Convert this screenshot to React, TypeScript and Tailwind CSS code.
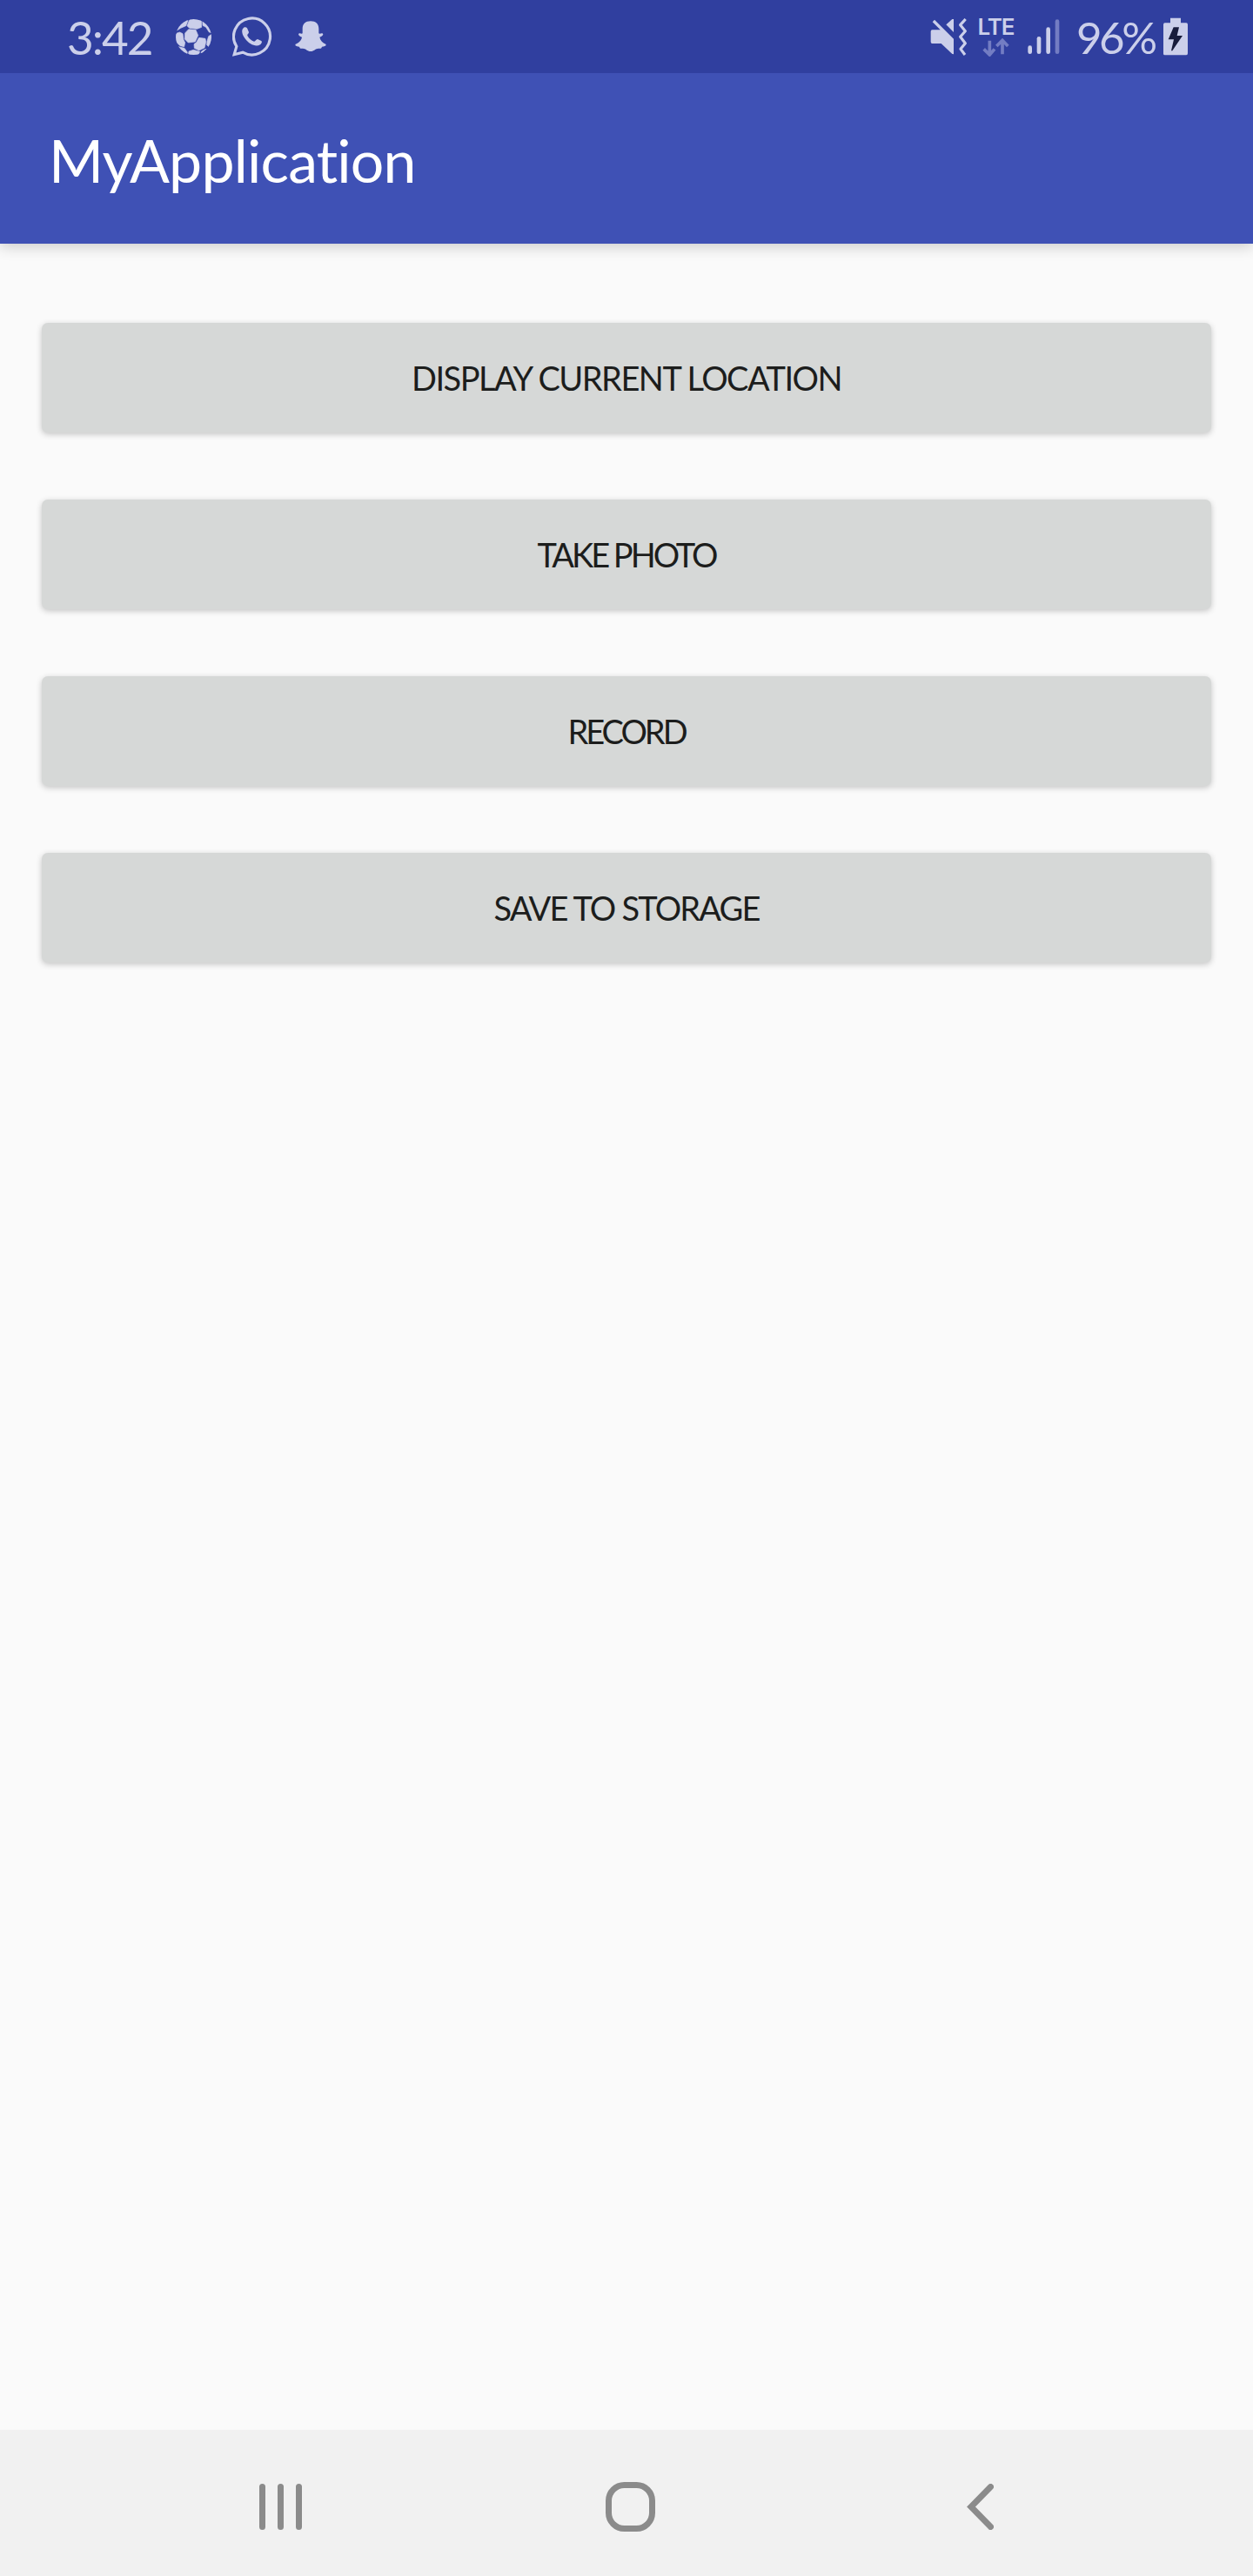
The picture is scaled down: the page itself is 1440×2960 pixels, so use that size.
import React from "react";

const INK = "#cbcfea";

function Ball() {
  return (
    <svg className="h-[41px] w-[41px]" viewBox="426 63 123 123">
      <defs>
        <clipPath id="ball">
          <circle cx="487.5" cy="124.500" r="61.500" />
        </clipPath>
      </defs>
      <g clipPath="url(#ball)" fill={INK} stroke={INK} strokeWidth="2" strokeLinejoin="round">
        <path d="M472 68 L480 60 L514 60 L515 91 L499 97 L473 94 L465 86Z" />
        <path d="M470 98 L495 100 L503 119 L493 141 L469 144 L457 132 L458 111Z" />
        <path d="M430 111 L440 108 L450 113 L453 134 L458 144 L455 158 L441 155 L426 140 L422 125Z" />
        <path d="M506 127 L528 130 L530 142 L525 162 L506 171 L490 163 L489 149 L497 143Z" />
        <path d="M462 62 L468 68 L461 86 L443 94 L430 102 L438 78Z" />
        <path d="M518 64 L542 80 L550 110 L541 108 L530 91 L519 85Z" />
        <path d="M539 122 L552 114 L552 138 L542 160 L533 152 L534 139Z" />
        <path d="M435 158 L456 163 L466 177 L464 186 L442 176Z" />
        <path d="M471 174 L487 169 L509 175 L502 190 L476 190 L470 181Z" />
        <path d="M523 169 L531 166 L518 180 L513 181 L514 175Z" />
      </g>
    </svg>
  );
}

function Whatsapp() {
  return (
    <svg className="ml-[24px] h-[46px] w-[46px]" viewBox="620 56 138 138">
      <path d="M626.500 187 L634.500 159 A63 63 0 1 1 656 179.500 Z" fill="none" stroke={INK} strokeWidth="9.500" />
      <path d="M657 97 C661 91 668 92 671 96 L677 110 C677 115 670 118 672 122 C678 133 686 139 695 142 C700 142 702 134 707 134 L720 140 C724 143 720 150 716 153 C707 159 694 157 683 150 C670 142 656 126 654 111 C653 105 654 100 657 97Z" fill={INK} />
    </svg>
  );
}

function Snap() {
  return (
    <svg className="ml-[26px] h-[36px] w-[36px]" viewBox="835 70 108 108">
      <path d="M889 71 C907 71 917 81 917 97 L917 113 C922 116 927 110 931 114 C935 119 925 124 920 126 C922 138 931 146 941 150 C945 156 936 159 928 159 C926 165 924 166 916 165 C905 165 901 175 889 175 C877 175 873 165 862 165 C854 166 852 165 850 159 C842 159 833 156 837 150 C847 146 857 138 859 126 C854 124 844 119 848 114 C852 110 857 116 861 113 L861 97 C861 81 871 71 889 71Z" fill={INK} />
    </svg>
  );
}

function Muted() {
  return (
    <svg className="h-[43px] w-[44px]" viewBox="51 57 132 129">
      <path d="M66 62 L132 128 L132 181 L127 180 L89 144 L58 144 Q53 144 53 138 L53 103 Q53 97 58 97 L86 97 L59 70Z" fill={INK} />
      <path d="M127 60 L132 60 L132 105 L106 79Z" fill={INK} />
      <path d="M173 60 L155 80 L172 101 L155 121 L172 143 L156 163 L171 183" fill="none" stroke={INK} strokeWidth="9.500" strokeLinejoin="round" />
    </svg>
  );
}

function Lte() {
  return (
    <div className="ml-[10px] flex h-[46px] w-[43px] flex-col items-center">
      <span className="h-[24px] w-[43px] whitespace-nowrap text-center font-['Inter'] text-[26px] leading-[24px] font-semibold tracking-[-1px]">LTE</span>
      <svg className="mt-[1px] h-[21px] w-[31px]" viewBox="232 130 93 63">
        <path d="M257 138 V185 M237 167 L257 187 L274 167 M301 185 V138 M281 157 L301 137 L320 157" fill="none" stroke="#737dc3" strokeWidth="11" />
      </svg>
    </div>
  );
}

function Signal() {
  return (
    <svg className="ml-[15px] h-[42px] w-[37px]" viewBox="389 62 111 126">
      <g strokeWidth="14" strokeLinecap="round" stroke={INK}>
        <path d="M397 163 V178" />
        <path d="M428 132 V178" />
        <path d="M460 100 V178" />
        <path d="M491 73 V178" stroke="#737dc3" />
      </g>
    </svg>
  );
}

function Battery() {
  return (
    <svg className="ml-[11px] h-[44px] w-[28px]" viewBox="858 56 84 132">
      <path d="M882 58 H918 V75 H937 Q942 75 942 81 V180 Q942 186 937 186 H863 Q858 186 858 181 V81 Q858 75 863 75 H882Z" fill={INK} />
      <path d="M893 90 H912 L905 119 H924 L889 171 H885 L894 132 H875Z" fill="#181c3c" />
    </svg>
  );
}

function ActionButton({ label, spacing }: { label: string; spacing: string }) {
  return (
    <button className="flex h-[126px] w-full items-center justify-center rounded-[7px] bg-[#d6d8d7] shadow-[0_2px_7px_rgba(0,0,0,0.22)]">
      <span className={"whitespace-nowrap text-[38px] leading-none text-[#1c1d1c] " + spacing}>{label}</span>
    </button>
  );
}

export default function App() {
  return (
    <div className="flex h-[2960px] w-[1440px] flex-col overflow-hidden bg-[#fafafa] font-['Lato',sans-serif]">
      <div className="z-20 flex h-[84px] shrink-0 items-center justify-between bg-[#303f9f] pr-[75px] pl-[77px] text-[#cbcfea]">
        <div className="flex items-center">
          <span className="w-[125px] whitespace-nowrap text-[53px] leading-none tracking-[-2px]">3:42</span>
          <Ball />
          <Whatsapp />
          <Snap />
        </div>
        <div className="flex items-center">
          <Muted />
          <Lte />
          <Signal />
          <span className="ml-[19px] w-[89px] whitespace-nowrap text-[51px] leading-none tracking-[-3.5px]">96%</span>
          <Battery />
        </div>
      </div>
      <header className="z-10 flex h-[196px] shrink-0 items-center bg-[#3f51b5] px-[56px] pt-[4px] shadow-[0_3px_16px_rgba(0,0,0,0.2)]">
        <h1 className="whitespace-nowrap text-[68px] leading-none tracking-[-0.8px] text-white [font-variant-ligatures:none]">MyApplication</h1>
      </header>
      <main className="flex flex-1 flex-col gap-[77px] px-[48px] pt-[91px]">
        <ActionButton label="DISPLAY CURRENT LOCATION" spacing="tracking-[-1.5px]" />
        <ActionButton label="TAKE PHOTO" spacing="tracking-[-3px]" />
        <ActionButton label="RECORD" spacing="tracking-[-3px]" />
        <ActionButton label="SAVE TO STORAGE" spacing="tracking-[-1.8px]" />
      </main>
      <nav className="flex h-[168px] shrink-0 items-center justify-between bg-[#f1f1f1] pt-[9px] pr-[298px] pl-[298px]">
        <svg className="h-[53px] w-[49px]" viewBox="0 0 49 53">
          <path d="M3.500 3.500V49.500M24.500 3.500V49.500M45.500 3.500V49.500" stroke="#8b8b8b" strokeWidth="7" strokeLinecap="round" />
        </svg>
        <svg className="ml-[-9px] h-[57px] w-[57px]" viewBox="0 0 57 57">
          <rect x="3.500" y="3.500" width="50" height="50" rx="18" fill="none" stroke="#8b8b8b" strokeWidth="7" />
        </svg>
        <svg className="h-[53px] w-[31px]" viewBox="0 0 31 53">
          <path d="M27.500 3.500L5 26.500L27.500 49.500" fill="none" stroke="#8b8b8b" strokeWidth="7" strokeLinecap="round" />
        </svg>
      </nav>
    </div>
  );
}
